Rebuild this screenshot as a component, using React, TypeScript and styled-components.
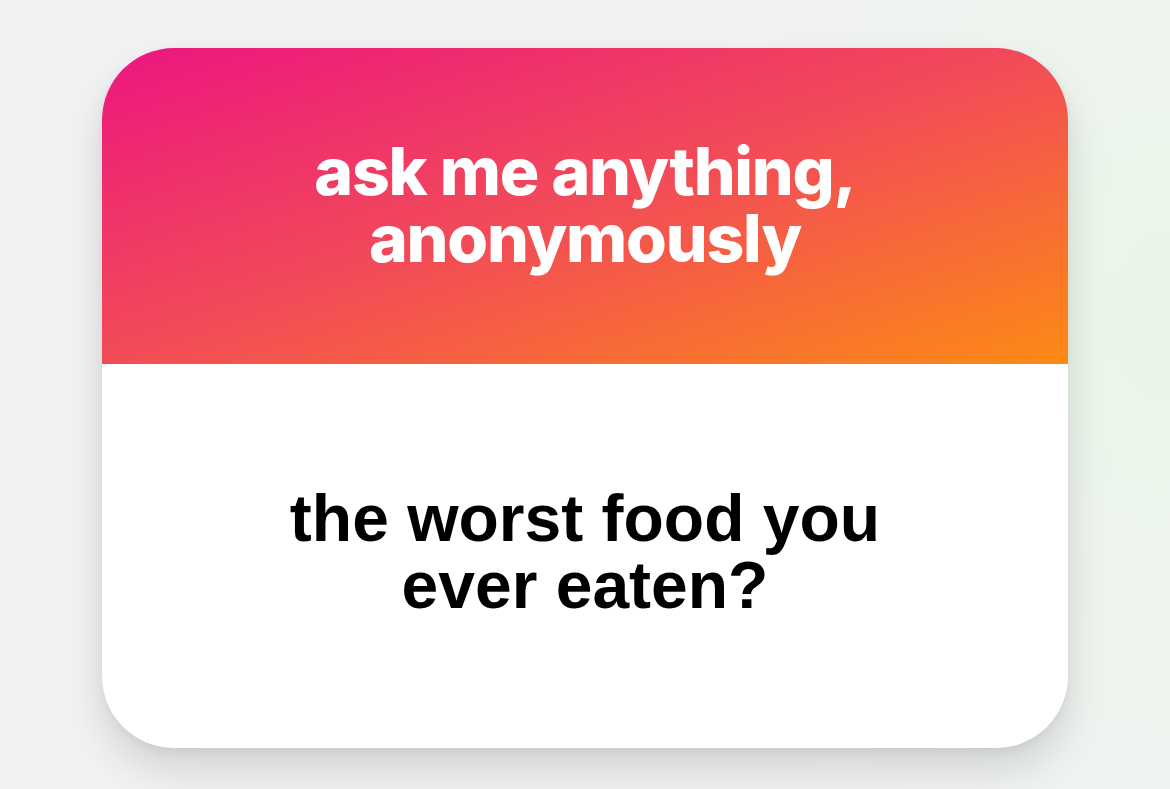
import React from 'react';
import styled, { createGlobalStyle } from 'styled-components';

const GlobalStyle = createGlobalStyle`
  html, body {
    margin: 0;
    padding: 0;
    height: 100%;
  }
  body {
    background: radial-gradient(ellipse 500px 700px at 100% 40%, #eaf6e8 0%, rgba(234, 246, 232, 0) 100%),
      #f2f2f4;
  }
  #root {
    min-height: 100vh;
  }
`;

const Page = styled.div`
  height: 789px;
  display: flex;
  justify-content: center;
  padding-top: 48px;
  box-sizing: border-box;
`;

const Card = styled.div`
  width: 966px;
  height: 700px;
  border-radius: 72px;
  overflow: hidden;
  background: #fff;
  display: flex;
  flex-direction: column;
  box-shadow: 0 22px 40px rgba(0, 0, 0, 0.13), 0 4px 10px rgba(0, 0, 0, 0.05);
`;

const Header = styled.div`
  height: 316px;
  flex-shrink: 0;
  background: linear-gradient(to bottom right, #ec167f 0%, #f24c57 50%, #fd8a15 100%);
  display: flex;
  align-items: center;
  justify-content: center;
`;

const HeaderTitle = styled.h1`
  margin: 0;
  color: #fff;
  font-family: Inter, 'Noto Sans', sans-serif;
  font-weight: 800;
  font-size: 66px;
  line-height: 67px;
  letter-spacing: -1.2px;
  text-align: center;
  padding-bottom: 2px;
`;

const Body = styled.div`
  flex: 1;
  display: flex;
  align-items: center;
  justify-content: center;
`;

const Question = styled.p`
  margin: 0;
  color: #000;
  font-family: 'Liberation Sans', Arial, sans-serif;
  font-weight: 700;
  font-size: 66px;
  line-height: 67px;
  letter-spacing: 0;
  text-align: center;
  padding-bottom: 8px;
`;

export default function App() {
  return (
    <>
      <GlobalStyle />
      <Page>
        <Card>
          <Header>
            <HeaderTitle>
              ask me anything,
              <br />
              anonymously
            </HeaderTitle>
          </Header>
          <Body>
            <Question>
              the worst food you
              <br />
              ever eaten?
            </Question>
          </Body>
        </Card>
      </Page>
    </>
  );
}
